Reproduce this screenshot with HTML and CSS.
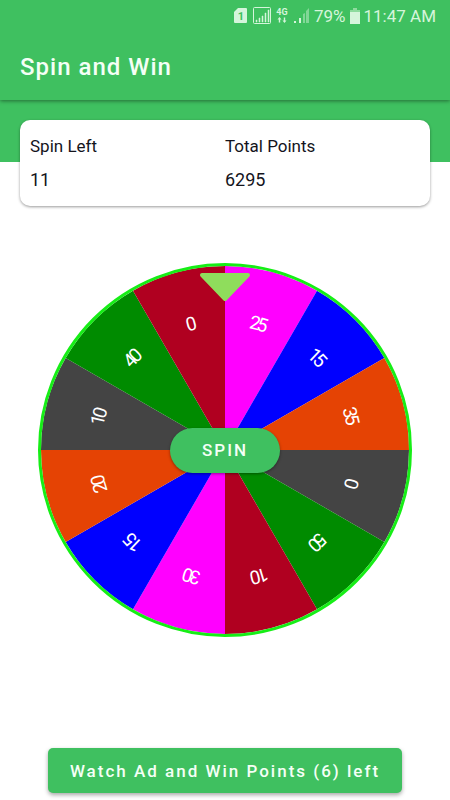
FILE: index.html
```html
<!DOCTYPE html>
<html lang="en">
<head>
    <meta charset="UTF-8">
    <meta name="viewport" content="width=device-width, initial-scale=1.0">
    <title>Spin and Win</title>
    <link rel="stylesheet" href="styles.css">
</head>
<body>
    <header class="app-bar">
        <div class="status-bar">
            <svg class="status-icons" width="76" height="20" viewBox="0 0 76 20" aria-hidden="true">
                <!-- sim card -->
                <path d="M4 2h8q1 0 1 1v13q0 1-1 1H1q-1 0-1-1V6z" fill="#d5f5db"/>
                <text x="7" y="14" class="sim-number">1</text>
                <!-- first signal -->
                <rect x="19.500" y="1.500" width="17" height="16" rx="1" fill="none" stroke="#d5f5db"/>
                <path d="M22 14h1v2h-1zM25 12h1v4h-1zM28 10h1v6h-1zM31 7h1v9h-1zM34 4h1v12h-1z" fill="#d5f5db" stroke="#d5f5db" stroke-width=".5"/>
                <!-- network type -->
                <text x="48" y="9" class="network">4G</text>
                <path d="M45.500 11l2 2.500h-1.300v3h-1.400v-3h-1.300zM50.500 17l-2-2.500h1.300v-3h1.400v3h1.300z" fill="#d5f5db"/>
                <!-- second signal -->
                <path d="M60 15h2v2h-2zM65 12h2v5h-2z" fill="#d5f5db"/>
                <path d="M69 8l2-1v10h-2zM72 5l3-3v15h-3z" fill="#d5f5db" opacity=".45"/>
            </svg>
            <span>79%</span>
            <svg class="battery" width="10" height="16" viewBox="0 0 10 16" aria-hidden="true">
                <path d="M3 0h4v2h3v14H0V2h3z" fill="#d5f5db"/>
                <path d="M3 0h4v2h3v2H0V2h3z" fill="#8edb9e"/>
            </svg>
            <span>11:47 AM</span>
        </div>
        <h1 class="title">Spin and Win</h1>
    </header>

    <div class="banner">
        <dl class="card">
            <div class="stat">
                <dt>Spin Left</dt>
                <dd>11</dd>
            </div>
            <div class="stat">
                <dt>Total Points</dt>
                <dd>6295</dd>
            </div>
        </dl>
    </div>

    <main class="content">
        <div class="wheel">
            <svg class="wheel-svg" viewBox="0 0 374 374">
                <defs>
                    <path id="slice" d="M187 187V3A184 184 0 0 1 279 27.65Z"/>
                    <path id="arc" d="M187 3A184 184 0 0 1 279 27.65"/>
                </defs>
                <g>
                    <use href="#slice" fill="#ff00ff"/>
                    <text dy="60"><textPath href="#arc" startOffset="50%">25</textPath></text>
                </g>
                <g transform="rotate(30 187 187)">
                    <use href="#slice" fill="#0000ff"/>
                    <text dy="60"><textPath href="#arc" startOffset="50%">15</textPath></text>
                </g>
                <g transform="rotate(60 187 187)">
                    <use href="#slice" fill="#e54304"/>
                    <text dy="60"><textPath href="#arc" startOffset="50%">35</textPath></text>
                </g>
                <g transform="rotate(90 187 187)">
                    <use href="#slice" fill="#444444"/>
                    <text dy="60"><textPath href="#arc" startOffset="50%">0</textPath></text>
                </g>
                <g transform="rotate(120 187 187)">
                    <use href="#slice" fill="#008b00"/>
                    <text dy="60"><textPath href="#arc" startOffset="50%">50</textPath></text>
                </g>
                <g transform="rotate(150 187 187)">
                    <use href="#slice" fill="#b00020"/>
                    <text dy="60"><textPath href="#arc" startOffset="50%">10</textPath></text>
                </g>
                <g transform="rotate(180 187 187)">
                    <use href="#slice" fill="#ff00ff"/>
                    <text dy="60"><textPath href="#arc" startOffset="50%">30</textPath></text>
                </g>
                <g transform="rotate(210 187 187)">
                    <use href="#slice" fill="#0000ff"/>
                    <text dy="60"><textPath href="#arc" startOffset="50%">15</textPath></text>
                </g>
                <g transform="rotate(240 187 187)">
                    <use href="#slice" fill="#e54304"/>
                    <text dy="60"><textPath href="#arc" startOffset="50%">20</textPath></text>
                </g>
                <g transform="rotate(270 187 187)">
                    <use href="#slice" fill="#444444"/>
                    <text dy="60"><textPath href="#arc" startOffset="50%">10</textPath></text>
                </g>
                <g transform="rotate(300 187 187)">
                    <use href="#slice" fill="#008b00"/>
                    <text dy="60"><textPath href="#arc" startOffset="50%">40</textPath></text>
                </g>
                <g transform="rotate(330 187 187)">
                    <use href="#slice" fill="#b00020"/>
                    <text dy="60"><textPath href="#arc" startOffset="50%">0</textPath></text>
                </g>
                <circle cx="187" cy="187" r="185.500" fill="none" stroke="#16ee16" stroke-width="3"/>
                <!-- pointer -->
                <path d="M164 12H210L187 36Z" fill="#8fdd5c" stroke="#8fdd5c" stroke-width="4" stroke-linejoin="round"/>
            </svg>
            <button class="spin-btn" type="button">SPIN</button>
        </div>
        <button class="ad-btn" type="button">Watch Ad and Win Points (6) left</button>
    </main>
</body>
</html>
```

FILE: styles.css
```css
* {
    box-sizing: border-box;
}

body {
    display: flex;
    flex-direction: column;
    min-height: 100vh;
    margin: 0;
    background-color: #fff;
    color: #14141c;
    font-family: Roboto, sans-serif;
}

.app-bar {
    position: relative;
    height: 100px;
    background-color: #3fc060;
    box-shadow: 0 1px 4px rgba(0, 0, 0, 0.45);
}

.status-bar {
    display: flex;
    justify-content: flex-end;
    align-items: center;
    gap: 4px;
    height: 32px;
    padding-right: 14px;
    color: #d5f5db;
    font-size: 17px;
}

.status-bar text {
    font-weight: 700;
    text-anchor: middle;
}

.sim-number {
    fill: #3fc060;
    font-size: 11px;
}

.network {
    fill: #d5f5db;
    font-size: 9px;
}

.title {
    margin: 0;
    padding: 0 20px;
    color: #f4fff6;
    font-size: 24px;
    font-weight: 500;
    line-height: 70px;
    letter-spacing: 1px;
}

.banner {
    padding: 20px 20px 0;
    background: linear-gradient(#3fc060, #3fc060) no-repeat top / 100% 62px;
}

.card {
    display: flex;
    margin: 0;
    padding: 9px 10px;
    background-color: #fff;
    border-radius: 10px;
    box-shadow: 0 1px 3px rgba(0, 0, 0, 0.4);
    font-size: 17px;
    line-height: 34px;
}

.stat {
    flex: 1;
}

.stat dd {
    margin: 0;
    font-size: 18px;
}

.content {
    display: flex;
    flex: 1;
    flex-direction: column;
    justify-content: space-between;
    align-items: center;
    padding: 57px 38px 7px;
}

.wheel {
    display: grid;
    place-items: center;
    width: 100%;
}

.wheel-svg,
.spin-btn {
    grid-area: 1 / 1;
}

.wheel-svg {
    display: block;
    width: 100%;
}

.wheel-svg text {
    fill: #fff;
    font-size: 19px;
    text-anchor: middle;
}

button {
    border: none;
    background-color: #3fc060;
    color: #f4fff6;
    font-family: inherit;
    font-size: 17px;
    font-weight: 500;
    letter-spacing: 2px;
    cursor: pointer;
}

.spin-btn {
    z-index: 1;
    width: 110px;
    height: 45px;
    border-radius: 23px;
    box-shadow: 0 1px 3px rgba(0, 0, 0, 0.4);
}

.ad-btn {
    height: 45px;
    padding: 0 22px;
    border-radius: 5px;
    box-shadow: 0 2px 4px rgba(0, 0, 0, 0.35);
}
```
